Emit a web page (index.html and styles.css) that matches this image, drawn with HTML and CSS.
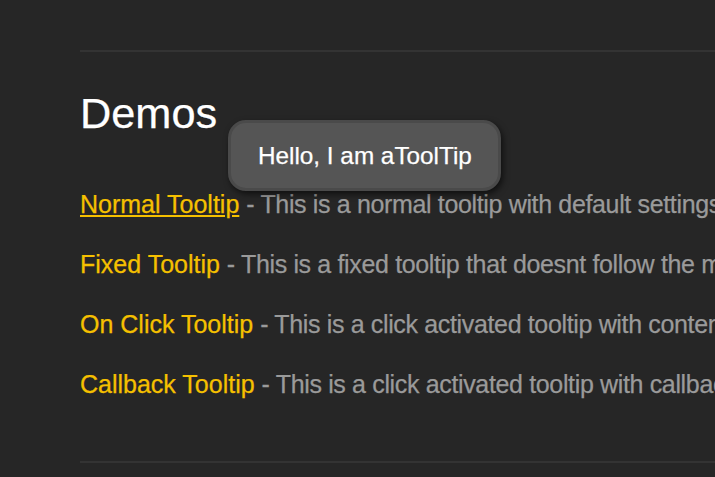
FILE: index.html
```html
<!DOCTYPE html>
<html>
<head>
<meta charset="utf-8">
<link rel="stylesheet" href="styles.css">
</head>
<body>
<div class="page">
  <hr class="rule">
  <section class="demos">
    <h2 class="title">Demos</h2>
    <p class="demo"><a class="link active" href="#">Normal Tooltip</a> <span class="desc">- This is a normal tooltip with default settings.</span></p>
    <p class="demo"><a class="link" href="#">Fixed Tooltip</a> <span class="desc">- This is a fixed tooltip that doesnt follow the mouse.</span></p>
    <p class="demo"><a class="link" href="#">On Click Tooltip</a> <span class="desc">- This is a click activated tooltip with content.</span></p>
    <p class="demo"><a class="link" href="#">Callback Tooltip</a> <span class="desc">- This is a click activated tooltip with callbacks.</span></p>
  </section>
  <hr class="rule">
</div>
<div class="tooltip">Hello, I am aToolTip</div>
</body>
</html>
```

FILE: styles.css
```css
html, body {
  margin: 0;
  padding: 0;
  background: #262626;
  overflow: hidden;
}
body {
  width: 715px;
  height: 477px;
  font-family: "Liberation Sans", Arial, sans-serif;
  position: relative;
  -webkit-text-stroke: 0.25px currentColor;
}
.page {
  padding: 50px 0 0 80px;
  white-space: nowrap;
  overflow: hidden;
}
.rule {
  margin: 0;
  border: 0;
  height: 2px;
  background: #333333;
}
.demos {
  padding: 36px 0 62px;
}
.title {
  margin: 0 0 51px;
  font-size: 43.3px;
  line-height: 50px;
  font-weight: normal;
  color: #ffffff;
}
.demo {
  margin: 0 0 30px;
  font-size: 25px;
  line-height: 30px;
  color: #9a9a9a;
}
.demo:last-child {
  margin-bottom: 0;
}
.desc {
  letter-spacing: -0.35px;
}
.link {
  color: #f5c000;
  text-decoration: none;
}
.link.active {
  text-decoration: underline;
  text-underline-offset: 2px;
}
.tooltip {
  position: absolute;
  left: 228px;
  top: 120px;
  box-sizing: border-box;
  width: 273px;
  height: 71px;
  padding-left: 27px;
  border: 3px solid #4a4a4a;
  border-radius: 18px;
  background: #555555;
  color: #ffffff;
  font-size: 24.3px;
  line-height: 65px;
  white-space: nowrap;
  box-shadow: 2px 3px 6px rgba(0, 0, 0, 0.6);
}
```
